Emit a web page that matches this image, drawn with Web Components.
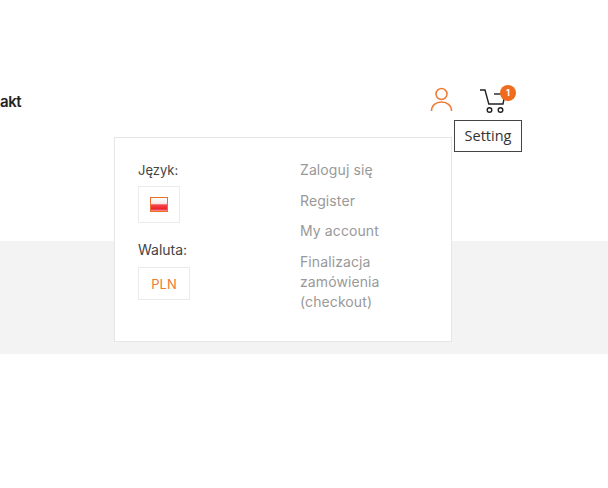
<!DOCTYPE html>
<html lang="pl">
<head>
<meta charset="utf-8">
<title>Sklep</title>
<style>
  html, body { margin: 0; padding: 0; background: #fff; }
  body { width: 608px; height: 488px; overflow: hidden; font-family: "Inter", "Liberation Sans", sans-serif; }
</style>
</head>
<body>
<shop-page>
  <shop-header></shop-header>
  <gray-band></gray-band>
</shop-page>

<script>
class ShopPage extends HTMLElement {
  constructor() {
    super();
    this.attachShadow({ mode: 'open' });
    this.shadowRoot.innerHTML = `
      <style>
        :host { display: block; }
      </style>
      <slot></slot>
    `;
  }
}

class ShopHeader extends HTMLElement {
  constructor() {
    super();
    this.attachShadow({ mode: 'open' });
    this.shadowRoot.innerHTML = `
      <style>
        :host { display: block; height: 241px; position: relative; }
        .bar { display: flex; align-items: flex-start; justify-content: space-between; padding: 85px 92px 0 0; }
        .nav { margin-top: 7px; font: 600 15px/20px "Inter", sans-serif; color: #222; letter-spacing: -0.4px; }
        .icons { display: flex; align-items: flex-start; gap: 26px; position: relative; }
        svg { display: block; }
        .cart { position: relative; width: 36px; height: 30px; }
        .badge {
          position: absolute; left: 20px; top: 0; width: 16px; height: 16px; border-radius: 50%;
          background: #ef6c1f; color: #fff; font: 700 9px/16px "Inter", sans-serif; text-align: center;
        }
        .tooltip {
          position: absolute; left: 454px; top: 120px; box-sizing: border-box; width: 68px; height: 32px;
          background: #fff; border: 1px solid #444; color: #333;
          font: 14.500px/30px "Open Sans", sans-serif; text-align: center;
        }
        .panel { position: absolute; left: 114px; top: 137px; }
      </style>
      <div class="bar">
        <div class="nav">akt</div>
        <div class="icons">
          <svg width="24" height="28" viewBox="0 0 24 28" fill="none" stroke="#ef7a33" stroke-width="1.5">
            <circle cx="11.500" cy="9" r="5.500"/>
            <path d="M1.500 26c0-5.500 4.400-9 10-9s10 3.500 10 9"/>
          </svg>
          <div class="cart">
            <svg width="36" height="30" viewBox="0 0 36 30" fill="none" stroke="#222" stroke-width="1.400">
              <path d="M0 5h5l3.800 14H23l1-5"/>
              <path d="M14 9h7"/>
              <circle cx="9.500" cy="25" r="2.300"/>
              <circle cx="20.500" cy="25" r="2.300"/>
            </svg>
            <div class="badge">1</div>
          </div>
        </div>
      </div>
      <div class="panel"><account-panel></account-panel></div>
      <div class="tooltip">Setting</div>
    `;
  }
}

class AccountPanel extends HTMLElement {
  constructor() {
    super();
    this.attachShadow({ mode: 'open' });
    this.shadowRoot.innerHTML = `
      <style>
        :host {
          display: grid; grid-template-columns: 162px 130px; box-sizing: border-box;
          width: 338px; height: 205px; padding: 23px 0 0 23px;
          background: #fff; border: 1px solid #e6e6e6;
          font-family: "Inter", sans-serif;
        }
        .label { font-size: 13px; line-height: 18px; color: #444; }
        .label.wide { font-size: 14px; }
        .box { box-sizing: border-box; border: 1px solid #ebebeb; display: flex; align-items: center; justify-content: center; }
        .lang { width: 42px; height: 37px; margin: 7px 0 18px; }
        .flag {
          box-sizing: border-box; width: 18px; height: 15px; border: 1.500px solid #e8702a;
          background: linear-gradient(#fff 0, #f6e6e6 45%, #f8474d 52%, #ec1f28 85%, #f6a5a8 100%);
        }
        .cur { width: 52px; height: 33px; margin-top: 8px; color: #ef7a33; font-size: 13px; }
        ul { list-style: none; margin: -1px 0 0; padding: 0; color: #999; font-size: 14px; line-height: 20px; letter-spacing: 0.1px; }
        li { margin-bottom: 10.500px; }
      </style>
      <div>
        <div class="label">Język:</div>
        <div class="box lang"><div class="flag"></div></div>
        <div class="label wide">Waluta:</div>
        <div class="box cur">PLN</div>
      </div>
      <ul>
        <li>Zaloguj się</li>
        <li>Register</li>
        <li>My account</li>
        <li>Finalizacja zamówienia (checkout)</li>
      </ul>
    `;
  }
}

class GrayBand extends HTMLElement {
  constructor() {
    super();
    this.attachShadow({ mode: 'open' });
    this.shadowRoot.innerHTML = `
      <style>
        :host { display: block; height: 113px; background: #f3f3f3; }
      </style>
    `;
  }
}

customElements.define('shop-page', ShopPage);
customElements.define('shop-header', ShopHeader);
customElements.define('account-panel', AccountPanel);
customElements.define('gray-band', GrayBand);
</script>
</body>
</html>
